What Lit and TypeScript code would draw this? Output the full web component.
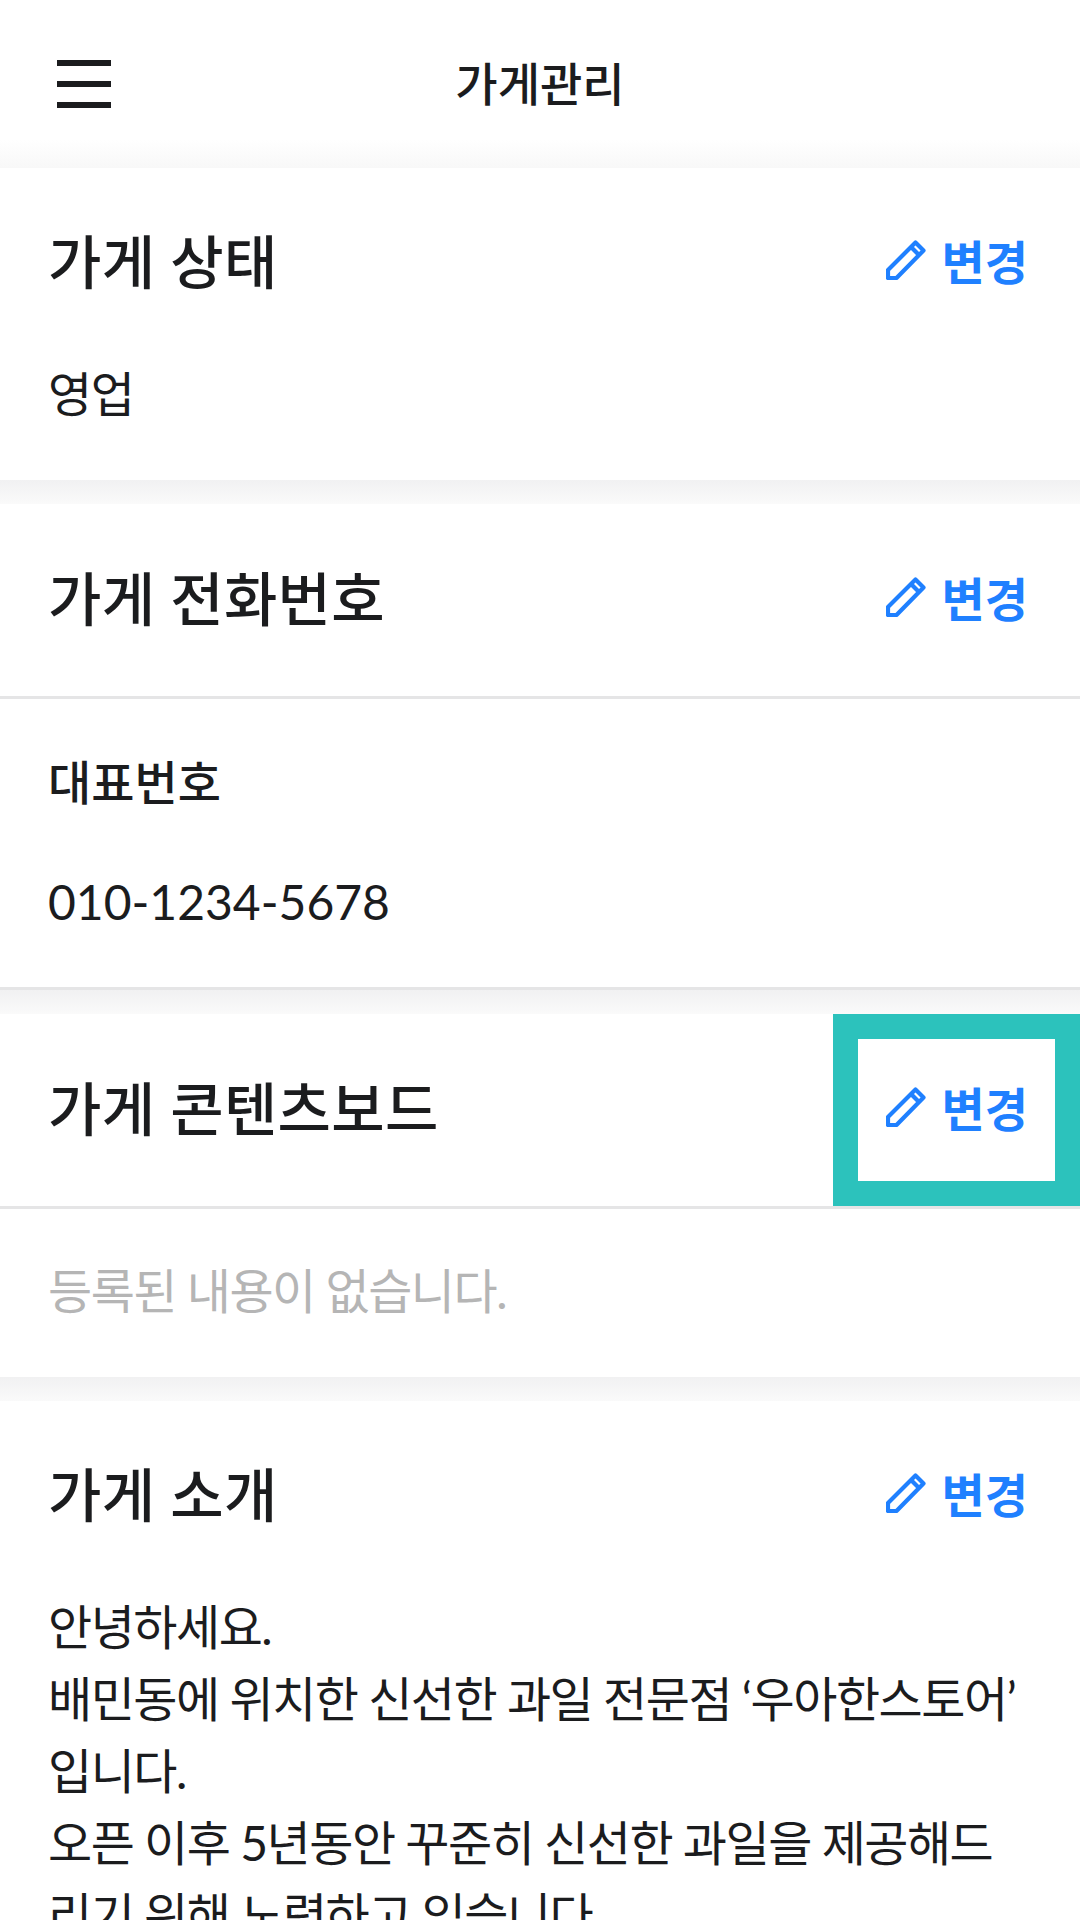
import { LitElement, html, css } from "lit";
import { customElement } from "lit/decorators.js";

const pencil = html`<svg class="pen" viewBox="0 0 40 40" width="40" height="40" fill="none" stroke="#1f80ff" stroke-width="4.2" stroke-linejoin="round"><path d="M2 30 L29.5 2.5 L37.5 10.5 L10.5 38 L2 38 Z"/><path d="M25.5 7.5 L32.5 14.5"/></svg>`;

@customElement("app-root")
export class AppRoot extends LitElement {
  static styles = css`
    :host { display: block; width: 1080px; height: 1920px; overflow: hidden; background: #fff;
      font-family: "Lato", "Noto Sans CJK KR", sans-serif; color: #1b1c1e; }
    .header { height: 161px; padding-bottom: 7px; display: flex; align-items: center; justify-content: center; position: relative;
      font-size: 46px; font-weight: 500; background: linear-gradient(#fff 140px, #f8f8f8 168px); }
    .menu { position: absolute; left: 57px; top: 60px; width: 54px; height: 48px; display: flex; flex-direction: column; justify-content: space-between; }
    .menu i { display: block; height: 6px; background: #1b1c1e; }
    .gap { height: 24px; background: linear-gradient(#f1f1f2, #fafafa); }
    .row { display: flex; align-items: center; justify-content: space-between; height: 190px; padding-left: 48px; }
    .row.b { height: 192px; border-bottom: 3px solid #e5e5e6; }
    h2 { margin: 0; font-size: 58px; font-weight: 500; letter-spacing: 0.3px; padding-bottom: 8px; }
    .change { display: flex; align-items: center; gap: 16px; color: #1f80ff; font-size: 47px; font-weight: 700; padding: 0 52px 7px 0; }
    .body { padding: 0 0 50px 48px; font-size: 48px; line-height: 72px; letter-spacing: -1.5px; }
    .phone { padding-top: 47px; padding-bottom: 49px; }
    .label { font-size: 47px; font-weight: 500; letter-spacing: 0; margin-bottom: 48px; }
    .num { letter-spacing: 0; }
    .line { height: 3px; background: #e5e5e6; }
    .empty { padding-top: 46px; color: #b5b5b5; }
    .hl { align-self: stretch; width: 247px; box-sizing: border-box; border: 25px solid #2cc2bc; background: #fff; display: flex; align-items: center; justify-content: flex-end; }
    .hl .change { padding-right: 27px; }
  `;
  row(t: string, cls = "") {
    return html`<div class="row ${cls}"><h2>${t}</h2><div class="change">${pencil}<span>변경</span></div></div>`;
  }
  render() {
    return html`
      <div class="header"><div class="menu"><i></i><i></i><i></i></div><span>가게관리</span></div>
      ${this.row("가게 상태")}
      <div class="body">영업</div>
      <div class="gap"></div>
      ${this.row("가게 전화번호", "b")}
      <div class="body phone"><div class="label">대표번호</div><div class="num">010-1234-5678</div></div>
      <div class="line"></div>
      <div class="gap"></div>
      <div class="row b"><h2>가게 콘텐츠보드</h2><div class="hl"><div class="change">${pencil}<span>변경</span></div></div></div>
      <div class="body empty">등록된 내용이 없습니다.</div>
      <div class="gap"></div>
      ${this.row("가게 소개")}
      <div class="body">안녕하세요.<br />배민동에 위치한 신선한 과일 전문점 ‘우아한스토어’<br />입니다.<br />오픈 이후 5년동안 꾸준히 신선한 과일을 제공해드<br />리기 위해 노력하고 있습니다.</div>
    `;
  }
}
